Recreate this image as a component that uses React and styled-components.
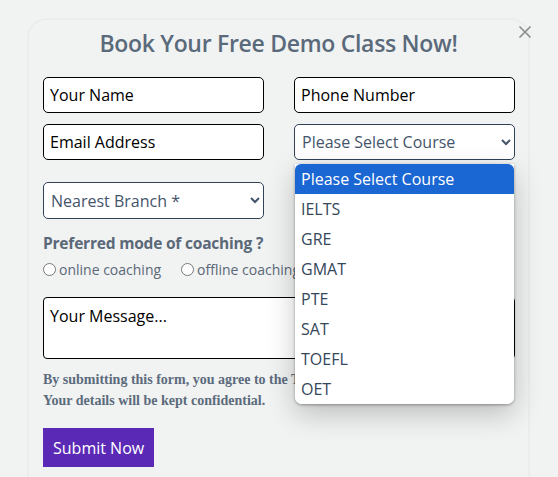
import React from "react";
import styled, { createGlobalStyle } from "styled-components";

const GlobalStyle = createGlobalStyle`
  body {
    margin: 0;
    background: #f1f2f2;
    font-family: "Open Sans", "Noto Sans", sans-serif;
  }
`;

const courses = ["Please Select Course", "IELTS", "GRE", "GMAT", "PTE", "SAT", "TOEFL", "OET"];

const Page = styled.div`
  padding: 18px 28px 0 27px;
  height: 477px;
  overflow: hidden;
  box-sizing: border-box;
`;

const Card = styled.div`
  position: relative;
  width: 503px;
  height: 520px;
  box-sizing: border-box;
  border: 2px solid #ececec;
  border-radius: 20px;
  padding: 8px 14px 0 14px;
`;

const Close = styled.button`
  position: absolute;
  top: 5px;
  right: -4px;
  width: 14px;
  height: 14px;
  padding: 0;
  border: none;
  background: none;
  cursor: pointer;
`;

const Title = styled.h2`
  margin: 0 0 19px;
  text-align: center;
  font-size: 23px;
  font-weight: 600;
  letter-spacing: -0.3px;
  color: #5a6a7b;
  line-height: 30px;
`;

const Grid = styled.div`
  display: grid;
  grid-template-columns: 221px 221px;
  column-gap: 30px;
  row-gap: 11px;
`;

const Field = styled.input`
  height: 36px;
  box-sizing: border-box;
  border: 1px solid #000;
  border-radius: 5px;
  padding: 0 6px;
  font: 16px "Open Sans", sans-serif;
  background: #fff;
  &::placeholder {
    color: #000;
  }
`;

const SelectWrap = styled.div`
  position: relative;
`;

const Select = styled.select`
  width: 100%;
  height: ${(p) => p.$h || 36}px;
  box-sizing: border-box;
  border: 1px solid #2f4256;
  border-radius: 5px;
  padding: 0 3px;
  font: 16px "Open Sans", sans-serif;
  color: #44546a;
  background: #fff;
`;

const BranchRow = styled.div`
  margin-top: 22px;
  width: 221px;
`;

const List = styled.ul`
  position: absolute;
  top: 40px;
  left: 1px;
  width: 219px;
  margin: 0;
  padding: 0;
  list-style: none;
  background: #fff;
  border-radius: 0 0 7px 7px;
  box-shadow: 0 10px 28px rgba(0, 0, 0, 0.22), 0 1px 3px rgba(0, 0, 0, 0.35);
  z-index: 5;
  overflow: hidden;
`;

const Option = styled.li`
  height: 30px;
  line-height: 30px;
  padding: 0 6px;
  font-size: 16px;
  color: ${(p) => (p.$active ? "#fff" : "#34475b")};
  background: ${(p) => (p.$active ? "#1a66d2" : "#fff")};
  border-radius: ${(p) => (p.$active ? "6px 6px 0 0" : "0")};
`;

const Label = styled.div`
  margin-top: 14px;
  font-size: 15.5px;
  font-weight: 700;
  color: #5a6878;
  letter-spacing: -0.2px;
  line-height: 20px;
`;

const Radios = styled.div`
  display: flex;
  gap: 20px;
  margin-top: 7px;
  font-size: 14px;
  color: #5a6878;
`;

const RadioLabel = styled.label`
  display: flex;
  align-items: center;
  gap: 3px;
  input {
    margin: 0;
    width: 13px;
    height: 13px;
  }
`;

const Message = styled.textarea`
  display: block;
  width: 472px;
  height: 62px;
  margin-top: 18px;
  box-sizing: border-box;
  border: 1px solid #000;
  border-radius: 4px;
  padding: 7px 6px;
  font: 16px "Open Sans", sans-serif;
  resize: none;
  background: #fff;
  &::placeholder {
    color: #000;
  }
`;

const Note = styled.p`
  margin: 10px 0 0;
  font: bold 14px/21px "Liberation Serif", serif;
  color: #5b6b7c;
`;

const Submit = styled.button`
  margin-top: 17px;
  height: 39px;
  padding: 0 10px;
  border: none;
  background: #5a2ab6;
  color: #fff;
  font: 16px "Open Sans", sans-serif;
  cursor: pointer;
`;

export default function App() {
  return (
    <>
      <GlobalStyle />
      <Page>
        <Card>
          <Close aria-label="close">
            <svg width="14" height="14" viewBox="0 0 14 14">
              <path d="M1.5 1.5 L12.5 12.5 M12.5 1.5 L1.5 12.5" stroke="#8a8a8a" strokeWidth="1.6" />
            </svg>
          </Close>
          <Title>Book Your Free Demo Class Now!</Title>
          <Grid>
            <Field placeholder="Your Name" />
            <Field placeholder="Phone Number" />
            <Field placeholder="Email Address" />
            <SelectWrap>
              <Select defaultValue="">
                <option value="">Please Select Course</option>
                {courses.slice(1).map((c) => (
                  <option key={c}>{c}</option>
                ))}
              </Select>
              <List>
                {courses.map((c, i) => (
                  <Option key={c} $active={i === 0}>
                    {c}
                  </Option>
                ))}
              </List>
            </SelectWrap>
          </Grid>
          <BranchRow>
            <Select $h={37} defaultValue="">
              <option value="">Nearest Branch *</option>
            </Select>
          </BranchRow>
          <Label>Preferred mode of coaching ?</Label>
          <Radios>
            <RadioLabel>
              <input type="radio" name="mode" /> online coaching
            </RadioLabel>
            <RadioLabel>
              <input type="radio" name="mode" /> offline coaching
            </RadioLabel>
          </Radios>
          <Message placeholder="Your Message..." />
          <Note>
            By submitting this form, you agree to the Terms &amp; Conditions.
            <br />
            Your details will be kept confidential.
          </Note>
          <Submit>Submit Now</Submit>
        </Card>
      </Page>
    </>
  );
}
